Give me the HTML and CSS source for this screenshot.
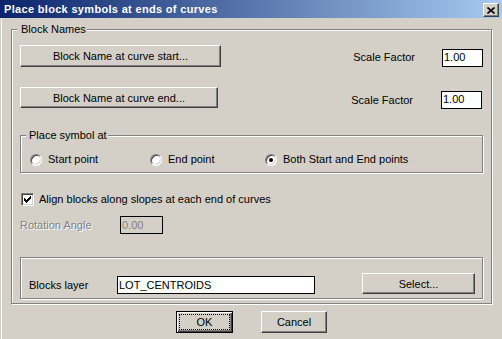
FILE: index.html
```html
<!DOCTYPE html>
<html lang="en">
<head>
    <meta charset="UTF-8">
    <title>Place block symbols at ends of curves</title>
    <link rel="stylesheet" href="styles.css">
</head>
<body>
    <div class="dialog">
        <div class="titlebar">
            <span class="title">Place block symbols at ends of curves</span>
            <button class="close-btn" aria-label="Close">
                <svg width="8" height="7" viewBox="0 0 8 7">
                    <path d="M0.5 0.5 L7.5 6.5 M7.5 0.5 L0.5 6.5" stroke="#000" stroke-width="1.6" fill="none"/>
                </svg>
            </button>
        </div>

        <div class="dialog-body">
            <div class="group outer">
                <div class="group-title">Block Names</div>

                <div class="row row-start">
                    <button class="btn btn-start">Block Name at curve start...</button>
                    <span class="field-label">Scale Factor</span>
                    <input class="edit scale" type="text" value="1.00">
                </div>

                <div class="row row-end">
                    <button class="btn btn-end">Block Name at curve end...</button>
                    <span class="field-label label-end">Scale Factor</span>
                    <input class="edit scale scale-end" type="text" value="1.00">
                </div>

                <div class="group place">
                    <div class="group-title">Place symbol at</div>
                    <div class="radio-row">
                        <label class="radio-item item-start"><span class="radio"></span>Start point</label>
                        <label class="radio-item item-end"><span class="radio"></span>End point</label>
                        <label class="radio-item"><span class="radio checked"></span>Both Start and End points</label>
                    </div>
                </div>

                <label class="check-row">
                    <span class="checkbox">
                        <svg width="7" height="7" viewBox="0 0 7 7">
                            <path d="M0 2h1v1h1v1h1v-1h1v-1h1v-1h1v-1h1v3h-1v1h-1v1h-1v1h-1v1h-1v-1h-1v-1h-1z" fill="#000"/>
                        </svg>
                    </span>
                    Align blocks along slopes at each end of curves
                </label>

                <div class="row rotation-row">
                    <span class="disabled-label">Rotation Angle</span>
                    <input class="edit rotation" type="text" value="0.00" disabled>
                </div>

                <div class="group layer">
                    <div class="row layer-row">
                        <span class="layer-label">Blocks layer</span>
                        <input class="edit layer-name" type="text" value="LOT_CENTROIDS">
                        <button class="btn btn-select">Select...</button>
                    </div>
                </div>
            </div>

            <div class="actions">
                <button class="btn btn-default"><span class="focus-ring">OK</span></button>
                <button class="btn btn-cancel">Cancel</button>
            </div>
        </div>
    </div>
</body>
</html>
```

FILE: styles.css
```css
body {
    margin: 0;
    background-color: #d4d0c8;
    font-family: "Liberation Sans", Arial, sans-serif;
    font-size: 11px;
    color: #000;
}
.dialog {
    width: 502px;
    height: 339px;
    overflow: hidden;
}
.titlebar {
    height: 18px;
    background: linear-gradient(to right, #0a246a, #a6caf0);
    display: flex;
    align-items: center;
    justify-content: space-between;
    padding: 0 3px 0 4px;
}
.title {
    color: #fff;
    font-weight: bold;
    font-size: 11px;
    letter-spacing: 0.32px;
    line-height: 18px;
}
.close-btn {
    align-self: flex-start;
    margin-top: 3px;
    width: 16px;
    height: 14px;
    padding: 0;
    background: #d4d0c8;
    border: 1px solid;
    border-color: #fff #404040 #404040 #fff;
    box-shadow: inset -1px -1px 0 #808080;
    display: flex;
    align-items: center;
    justify-content: center;
}
.dialog-body {
    margin-left: 1px;
    border-left: 1px solid #fff;
    padding: 11px 10px 0 9px;
    height: 321px;
}

/* etched group boxes */
.group {
    border: 1px solid #808080;
    box-shadow: 1px 1px 0 #fff, inset 1px 1px 0 #fff;
}
.group-title {
    display: table;
    margin: -7px 0 0 -3px;
    padding: 0 1px 0 4px;
    background: #d4d0c8;
    line-height: 13px;
}
.outer {
    width: 481px;
    box-sizing: border-box;
    padding: 0 8px 4px;
}

.row {
    display: flex;
    align-items: flex-start;
}
.btn {
    font: inherit;
    color: #000;
    background: #d4d0c8;
    border: 1px solid;
    border-color: #fff #404040 #404040 #fff;
    box-shadow: inset -1px -1px 0 #808080;
    padding: 0;
    box-sizing: border-box;
}
.edit {
    font: inherit;
    color: #000;
    background: #fff;
    border: 1px solid #000;
    box-sizing: border-box;
    height: 18px;
    padding: 0 1px;
    outline: none;
}
.row-start {
    margin-top: 9px;
}
.btn-start {
    width: 201px;
    height: 22px;
}
.field-label {
    margin-left: auto;
    margin-right: 27px;
    line-height: 22px;
    padding-top: 1px;
}
.scale {
    width: 41px;
    margin-top: 4px;
    padding-bottom: 3px;
}
.row-end {
    margin-top: 19px;
}
.btn-end {
    width: 198px;
    height: 21px;
}
.label-end {
    margin-right: 28px;
    padding-top: 2px;
}
.scale-end {
    margin-right: 1px;
}

.place {
    margin-top: 24px;
    padding: 0 0 6px 9px;
}
.place .group-title {
    margin-left: -4px;
    padding-left: 3px;
}
.radio-row {
    display: flex;
    margin-top: 11px;
    line-height: 13px;
}
.radio-item {
    display: flex;
    align-items: center;
    gap: 6px;
}
.item-start {
    width: 120px;
}
.item-end {
    width: 115px;
}
.radio {
    width: 12px;
    height: 12px;
    box-sizing: border-box;
    border-radius: 50%;
    background: #fff;
    border: 1px solid;
    border-color: #808080 #fff #fff #808080;
    box-shadow: inset 1px 1px 0 #404040, inset -1px -1px 0 #d4d0c8;
    display: flex;
    align-items: center;
    justify-content: center;
}
.radio.checked::after {
    content: "";
    width: 4px;
    height: 4px;
    border-radius: 50%;
    background: #000;
}

.check-row {
    display: flex;
    align-items: center;
    gap: 5px;
    margin: 20px 0 0 1px;
    line-height: 13px;
}
.checkbox {
    width: 13px;
    height: 13px;
    box-sizing: border-box;
    background: #fff;
    border: 1px solid;
    border-color: #808080 #fff #fff #808080;
    box-shadow: inset 1px 1px 0 #404040, inset -1px -1px 0 #d4d0c8;
    display: flex;
    align-items: center;
    justify-content: center;
}

.rotation-row {
    align-items: center;
    margin-top: 10px;
}
.disabled-label {
    width: 100px;
    color: #808080;
    text-shadow: 1px 1px 0 #fff;
}
.rotation {
    width: 43px;
    background: #d4d0c8;
    color: #808080;
}

.layer {
    margin-top: 23px;
    padding: 15px 7px 4px 8px;
}
.layer-row {
    align-items: flex-end;
}
.layer-label {
    width: 88px;
    line-height: 18px;
}
.layer-name {
    width: 198px;
}
.btn-select {
    margin-left: auto;
    width: 113px;
    height: 21px;
}

.actions {
    display: flex;
    justify-content: center;
    gap: 28px;
    margin-top: 7px;
}
.btn-default {
    width: 57px;
    height: 22px;
    border: 1px solid #000;
    box-shadow: inset 1px 1px 0 #fff, inset -1px -1px 0 #404040, inset -2px -2px 0 #808080;
    padding: 2px;
}
.focus-ring {
    display: block;
    height: 100%;
    box-sizing: border-box;
    border: 1px dotted #000;
    line-height: 14px;
}
.btn-cancel {
    width: 66px;
    height: 22px;
}
```
